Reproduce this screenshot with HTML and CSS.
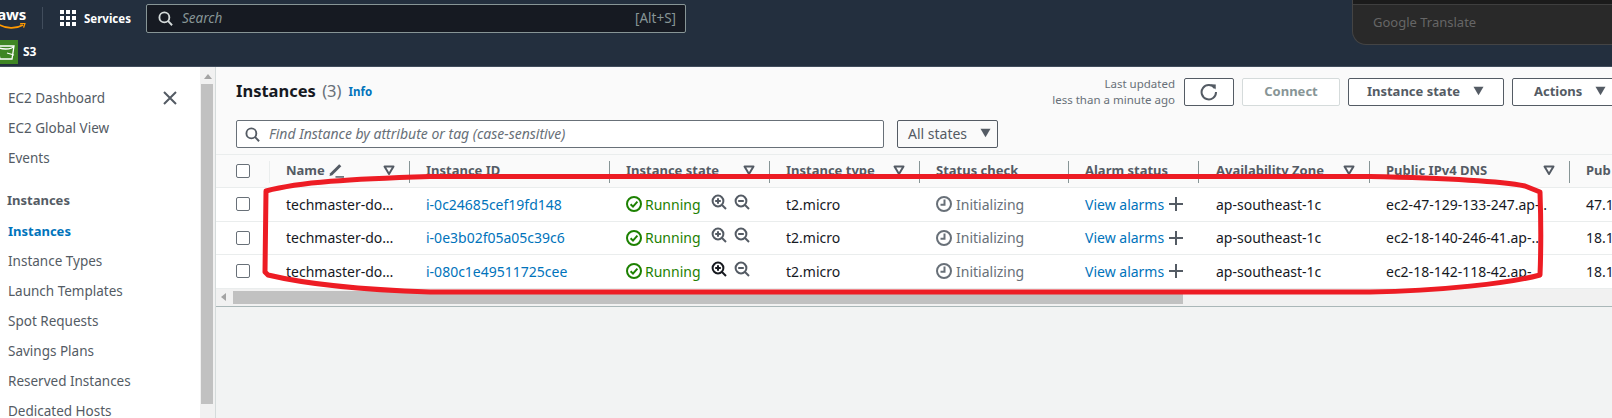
FILE: index.html
```html
<!DOCTYPE html>
<html lang="en">
<head>
<meta charset="utf-8">
<title>Instances | EC2</title>
<link rel="stylesheet" href="styles.css">
</head>
<body>
<svg width="0" height="0" class="defs">
  <defs>
    <symbol id="tri" viewBox="0 0 12 12"><path d="M1.5 2.5h9L6 10z" fill="none" stroke="currentColor" stroke-width="2" stroke-linejoin="round"/></symbol>
    <symbol id="caret" viewBox="0 0 14 12"><path d="M1 1h12L7 11z" fill="currentColor"/></symbol>
    <symbol id="plusmag" viewBox="0 0 16 16"><circle cx="7" cy="7" r="5.4" fill="none" stroke="currentColor" stroke-width="2"/><path d="M11 11l4 4" stroke="currentColor" stroke-width="2"/><path d="M4.2 7h5.6M7 4.2v5.6" stroke="currentColor" stroke-width="2"/></symbol>
    <symbol id="minusmag" viewBox="0 0 16 16"><circle cx="7" cy="7" r="5.4" fill="none" stroke="currentColor" stroke-width="2"/><path d="M11 11l4 4" stroke="currentColor" stroke-width="2"/><path d="M4.2 7h5.6" stroke="currentColor" stroke-width="2"/></symbol>
    <symbol id="ok" viewBox="0 0 16 16"><circle cx="8" cy="8" r="7" fill="none" stroke="currentColor" stroke-width="2"/><path d="M4.6 8.2l2.4 2.4 4.4-5" fill="none" stroke="currentColor" stroke-width="2"/></symbol>
    <symbol id="clock" viewBox="0 0 16 16"><circle cx="8" cy="8" r="7" fill="none" stroke="currentColor" stroke-width="2"/><path d="M8.5 3.5V8.8H4.5" fill="none" stroke="currentColor" stroke-width="2"/></symbol>
    <symbol id="plus" viewBox="0 0 14 14"><path d="M7 0v14M0 7h14" stroke="currentColor" stroke-width="2"/></symbol>
    <symbol id="search" viewBox="0 0 16 16"><circle cx="6.8" cy="6.8" r="5.3" fill="none" stroke="currentColor" stroke-width="2"/><path d="M10.6 10.6l4.4 4.6" stroke="currentColor" stroke-width="2"/></symbol>
  </defs>
</svg>

<header class="nav">
  <div class="nav-top">
    <div class="logo">
      <span class="logo-text">aws</span>
      <svg class="smile" viewBox="0 0 30 8" width="30" height="8"><path d="M0 1c8 5 18 5 25 1" fill="none" stroke="#ff9900" stroke-width="1.6"/><path d="M22 .8l5-.6-1.4 4.4" fill="none" stroke="#ff9900" stroke-width="1.3"/></svg>
    </div>
    <div class="nav-sep"></div>
    <div class="grid-icon"><i></i><i></i><i></i><i></i><i></i><i></i><i></i><i></i><i></i></div>
    <span class="services">Services</span>
    <div class="nav-search">
      <svg class="nav-search-icon" width="15" height="15"><use href="#search"/></svg>
      <span class="nav-search-ph">Search</span>
      <span class="nav-search-key">[Alt+S]</span>
    </div>
  </div>
  <div class="nav-bottom">
    <div class="s3-box">
      <svg viewBox="0 0 18 24" width="18" height="24"><path d="M-3 6h17l-2 13H0zM-3 6c2 4 15 4 17 0M7 13l7 2" fill="none" stroke="#fff" stroke-width="1.3"/></svg>
    </div>
    <span class="s3-label">S3</span>
  </div>
  <div class="translate"><div class="translate-band"></div><div class="translate-foot">Google Translate</div></div>
</header>

<div class="body">
  <nav class="side">
    <div class="side-head">
      <a class="side-link">EC2 Dashboard</a>
      <svg class="side-close" viewBox="0 0 14 14" width="14" height="14"><path d="M1 1l12 12M13 1L1 13" stroke="#545b64" stroke-width="2"/></svg>
    </div>
    <a class="side-link">EC2 Global View</a>
    <a class="side-link">Events</a>
    <div class="side-title">Instances</div>
    <a class="side-link active">Instances</a>
    <a class="side-link">Instance Types</a>
    <a class="side-link">Launch Templates</a>
    <a class="side-link">Spot Requests</a>
    <a class="side-link">Savings Plans</a>
    <a class="side-link">Reserved Instances</a>
    <a class="side-link">Dedicated Hosts</a>
  </nav>
  <div class="vscroll"><div class="vscroll-arrow"></div><div class="vscroll-thumb"></div></div>

  <main class="main">
    <section class="panel">
      <div class="panel-head">
        <h1 class="title">Instances <span class="count">(3)</span></h1>
        <a class="info">Info</a>
        <div class="updated">Last updated<br>less than a minute ago</div>
        <button class="btn btn-icon">
          <svg viewBox="0 0 18 18" width="18" height="18"><path d="M14.8 5.2A7.2 7.2 0 1 0 16 9" fill="none" stroke="#545b64" stroke-width="2"/><path d="M10.8 1.2l5 .2-.2 5z" fill="#545b64"/></svg>
        </button>
        <button class="btn btn-off">Connect</button>
        <button class="btn btn-state">Instance state<svg class="btn-caret" width="13" height="10"><use href="#caret"/></svg></button>
        <button class="btn btn-actions">Actions<svg class="btn-caret" width="13" height="10"><use href="#caret"/></svg></button>
      </div>
      <div class="filters">
        <div class="find">
          <svg class="find-icon" width="15" height="15"><use href="#search"/></svg>
          <span class="find-ph">Find Instance by attribute or tag (case-sensitive)</span>
        </div>
        <button class="states">All states<svg class="btn-caret" width="13" height="10"><use href="#caret"/></svg></button>
      </div>
    </section>

    <section class="table">
      <div class="row head">
        <div class="cell chk first"><span class="box"></span></div>
        <div class="cell sep-light"><span class="label">Name</span>
          <svg class="pencil" viewBox="0 0 15 15" width="16" height="16"><path d="M2 10.5L10.5 2l2 2L4 12.5l-2.6.6z" fill="#545b64"/><path d="M7 14h8" stroke="#545b64" stroke-width="1.4"/></svg>
          <svg class="sort" width="12" height="12"><use href="#tri"/></svg></div>
        <div class="cell sep"><span class="label">Instance ID</span></div>
        <div class="cell sep"><span class="label">Instance state</span><svg class="sort" width="12" height="12"><use href="#tri"/></svg></div>
        <div class="cell sep"><span class="label">Instance type</span><svg class="sort" width="12" height="12"><use href="#tri"/></svg></div>
        <div class="cell sep"><span class="label">Status check</span></div>
        <div class="cell sep"><span class="label">Alarm status</span></div>
        <div class="cell sep az"><span class="label">Availability Zone</span><svg class="sort" width="12" height="12"><use href="#tri"/></svg></div>
        <div class="cell sep"><span class="label">Public IPv4 DNS</span><svg class="sort" width="12" height="12"><use href="#tri"/></svg></div>
        <div class="cell sep"><span class="label">Pub</span></div>
      </div>

      <div class="row">
        <div class="cell chk"><span class="box"></span></div>
        <div class="cell">techmaster-do…</div>
        <div class="cell"><a class="link">i-0c24685cef19fd148</a></div>
        <div class="cell run"><svg class="ok" width="16" height="16"><use href="#ok"/></svg><span class="running">Running</span><svg class="mag" width="16" height="16"><use href="#plusmag"/></svg><svg class="mag" width="16" height="16"><use href="#minusmag"/></svg></div>
        <div class="cell">t2.micro</div>
        <div class="cell"><svg class="clock" width="16" height="16"><use href="#clock"/></svg><span class="init">Initializing</span></div>
        <div class="cell"><a class="link">View alarms</a><svg class="plus" width="14" height="14"><use href="#plus"/></svg></div>
        <div class="cell az">ap-southeast-1c</div>
        <div class="cell">ec2-47-129-133-247.ap-..</div>
        <div class="cell">47.1</div>
      </div>

      <div class="row">
        <div class="cell chk"><span class="box"></span></div>
        <div class="cell">techmaster-do…</div>
        <div class="cell"><a class="link">i-0e3b02f05a05c39c6</a></div>
        <div class="cell run"><svg class="ok" width="16" height="16"><use href="#ok"/></svg><span class="running">Running</span><svg class="mag" width="16" height="16"><use href="#plusmag"/></svg><svg class="mag" width="16" height="16"><use href="#minusmag"/></svg></div>
        <div class="cell">t2.micro</div>
        <div class="cell"><svg class="clock" width="16" height="16"><use href="#clock"/></svg><span class="init">Initializing</span></div>
        <div class="cell"><a class="link">View alarms</a><svg class="plus" width="14" height="14"><use href="#plus"/></svg></div>
        <div class="cell az">ap-southeast-1c</div>
        <div class="cell">ec2-18-140-246-41.ap-..</div>
        <div class="cell">18.1</div>
      </div>

      <div class="row">
        <div class="cell chk"><span class="box"></span></div>
        <div class="cell">techmaster-do…</div>
        <div class="cell"><a class="link">i-080c1e49511725cee</a></div>
        <div class="cell run"><svg class="ok" width="16" height="16"><use href="#ok"/></svg><span class="running">Running</span><svg class="mag hot" width="16" height="16"><use href="#plusmag"/></svg><svg class="mag" width="16" height="16"><use href="#minusmag"/></svg></div>
        <div class="cell">t2.micro</div>
        <div class="cell"><svg class="clock" width="16" height="16"><use href="#clock"/></svg><span class="init">Initializing</span></div>
        <div class="cell"><a class="link">View alarms</a><svg class="plus" width="14" height="14"><use href="#plus"/></svg></div>
        <div class="cell az">ap-southeast-1c</div>
        <div class="cell">ec2-18-142-118-42.ap-..</div>
        <div class="cell">18.1</div>
      </div>

      <div class="hscroll">
        <div class="hscroll-arrow"></div>
        <div class="hscroll-thumb"></div>
      </div>
    </section>
  </main>
</div>

<svg class="scribble" width="1612" height="418" viewBox="0 0 1612 418">
  <path d="M266 191 C300 182 350 179 430 176.5 L1370 176.5 C1440 178 1500 181 1525 186 L1540 192 C1541 220 1541 250 1540 275 C1510 283 1440 291 1370 292 L430 292 C370 290 310 285 268 275 L265 272 Z" fill="none" stroke="#ed1c24" stroke-width="5" stroke-linejoin="round"/>
</svg>
</body>
</html>
```

FILE: styles.css
```css
* { box-sizing: border-box; }
html, body { margin: 0; height: 418px; overflow: hidden; }
body {
  position: relative;
  font-family: "Noto Sans", "Liberation Sans", sans-serif;
  font-size: 14px;
  color: #16191f;
  background: #f2f3f3;
}
.defs { position: absolute; }
.scribble { position: absolute; left: 0; top: 0; pointer-events: none; }

/* top navigation */
.nav { position: relative; height: 67px; background: #232f3e; border-bottom: 1px solid #414d5c; color: #fff; }
.nav-top { height: 36px; display: flex; align-items: center; }
.logo { width: 30px; height: 30px; position: relative; overflow: hidden; flex: none; }
.logo-text { position: absolute; right: 4px; top: 2px; font-size: 15px; font-weight: 700; line-height: 18px; letter-spacing: -.2px; }
.smile { position: absolute; right: 2px; top: 20px; }
.nav-sep { width: 1px; height: 22px; background: #414d5c; margin-left: 12px; flex: none; }
.grid-icon { display: grid; grid-template-columns: repeat(3, 4px); grid-auto-rows: 4px; gap: 2px; margin-left: 17px; flex: none; }
.grid-icon i { background: #fff; display: block; }
.services { font-size: 11.5px; font-weight: 700; margin-left: 8px; width: 62px; flex: none; }
.nav-search { width: 540px; height: 29px; display: flex; align-items: center; background: #161a22; border: 1px solid #879596; border-radius: 2px; padding: 0 9px 0 11px; color: #d5dbdb; }
.nav-search-ph { font-style: italic; font-size: 13.5px; color: #879596; margin-left: 9px; }
.nav-search-key { margin-left: auto; font-size: 13.5px; color: #879596; }
.nav-search-icon { flex: none; }
.nav-bottom { display: flex; height: 30px; align-items: flex-start; padding-top: 4px; }
.s3-box { width: 18px; height: 24px; background: #3f8624; overflow: hidden; }
.s3-box svg { display: block; }
.s3-label { font-size: 12px; font-weight: 700; margin-left: 5px; line-height: 24px; }
.translate { position: absolute; left: 1352px; right: -20px; top: -1px; height: 46px; background: #292929; border: 1px solid #444; border-top: 0; border-radius: 0 0 14px 14px; }
.translate-band { height: 6px; background: #1b1b1b; border-bottom: 1px solid #3f3f3f; }
.translate-foot { padding: 9px 0 0 20px; font-size: 13px; line-height: 16px; color: #666; }

/* page body */
.body { display: flex; height: 351px; }
.side { width: 200px; background: #fff; padding-top: 16px; color: #545b64; flex: none; overflow: hidden; font-size: 13.5px; }
.side-head { display: flex; align-items: center; justify-content: space-between; padding-right: 23px; }
.side-close { flex: none; }
.side-link { display: block; height: 30px; line-height: 30px; padding-left: 8px; color: #545b64; white-space: nowrap; }
.side-title { font-size: 13px; font-weight: 700; height: 30px; line-height: 30px; padding-left: 7px; margin-top: 12px; margin-bottom: 1px; }
.side-link.active { color: #0073bb; font-size: 13px; font-weight: 700; }
.vscroll { width: 16px; background: #f1f1f1; flex: none; padding: 0 2px 0 1px; border-right: 1px solid #d5dbdb; }
.vscroll-arrow { height: 17px; position: relative; }
.vscroll-arrow::before { content: ""; position: absolute; left: 3px; top: 7px; border: 4px solid transparent; border-top: 0; border-bottom: 5px solid #a3a3a3; }
.vscroll-thumb { height: 320px; background: #c1c1c1; }

.main { flex: 1; min-width: 0; overflow: hidden; }
.panel { height: 87px; background: #fafafa; padding: 10px 0 0 20px; }
.panel-head { display: flex; align-items: center; height: 30px; position: relative; }
.title { margin: 0 0 3px; font-size: 16.5px; font-weight: 700; line-height: 24px; white-space: nowrap; }
.count { font-weight: 400; color: #687078; margin-left: 2px; }
.info { font-size: 11.5px; font-weight: 700; color: #0073bb; margin: 0 0 2px 7px; }
.updated { margin: 0 9px 0 auto; font-size: 11.5px; line-height: 16px; color: #687078; text-align: right; white-space: nowrap; }
.btn { font: inherit; font-size: 13px; font-weight: 700; height: 28px; background: #fff; border: 1px solid #545b64; border-radius: 2px; color: #545b64; padding: 0 0 2px; display: flex; align-items: center; justify-content: center; flex: none; }
.btn-icon { width: 50px; margin-right: 8px; padding: 0; }
.btn-off { width: 98px; margin-right: 8px; border-color: #d5dbdb; color: #879596; }
.btn-state { width: 156px; margin-right: 8px; }
.btn-actions { width: 116px; margin-right: -16px; justify-content: flex-start; padding-left: 21px; }
.btn-caret { margin-left: 12px; color: #545b64; flex: none; }
.filters { display: flex; margin-top: 13px; gap: 13px; }
.find { width: 648px; height: 28px; display: flex; align-items: center; background: #fff; border: 1px solid #687078; border-radius: 2px; padding-left: 8px; }
.find-icon { color: #545b64; flex: none; }
.find-ph { font-style: italic; font-size: 14px; color: #687078; margin-left: 9px; white-space: nowrap; padding-bottom: 2px; }
.states { font: inherit; width: 101px; height: 28px; background: #fafafa; border: 1px solid #545b64; border-radius: 2px; color: #545b64; padding: 0 0 2px 10px; display: flex; align-items: center; }

/* table */
.table { --cols: 53px 140px 200px 160px 150px 149px 130px 171px 200px 1fr; background: #fff; border-top: 1px solid #eaeded; }
.row { display: grid; grid-template-columns: var(--cols); height: 33.5px; border-bottom: 1px solid #eaeded; }
.row.head { height: 33px; background: #fafafa; font-size: 13px; font-weight: 700; color: #545b64; }
.cell { display: flex; align-items: center; padding-left: 17px; white-space: nowrap; overflow: hidden; position: relative; min-width: 0; }
.cell.az { padding-left: 18px; }
.cell.chk { padding-left: 20px; }
.label { padding-bottom: 2px; }
.box { width: 14px; height: 14px; background: #fff; border: 1.5px solid #687078; border-radius: 2px; display: block; }
.sep::before, .sep-light::before { content: ""; position: absolute; left: 0; top: 6px; bottom: 4px; width: 1px; background: #879596; }
.sep-light::before { background: #eaeded; }
.sort { position: absolute; right: 14px; top: 9px; color: #545b64; }
.pencil { margin: 0 0 2px 3px; flex: none; }
.link { color: #0073bb; }
.ok { color: #1d8102; flex: none; }
.running { color: #1d8102; margin-left: 3px; margin-right: 10px; }
.mag { color: #545b64; margin-right: 7px; margin-top: -5px; flex: none; }
.mag.hot { color: #16191f; }
.clock { color: #687078; flex: none; }
.init { color: #687078; margin-left: 4px; }
.plus { color: #545b64; margin-left: 5px; flex: none; }

.hscroll { height: 17px; background: #f1f1f1; border-bottom: 1px solid #aab7b8; display: flex; align-items: center; padding-left: 5px; box-sizing: content-box; }
.hscroll-arrow { border: 4px solid transparent; border-left: 0; border-right: 5px solid #a3a3a3; }
.hscroll-thumb { width: 950px; height: 13px; background: #c1c1c1; margin-left: 7px; }
```
